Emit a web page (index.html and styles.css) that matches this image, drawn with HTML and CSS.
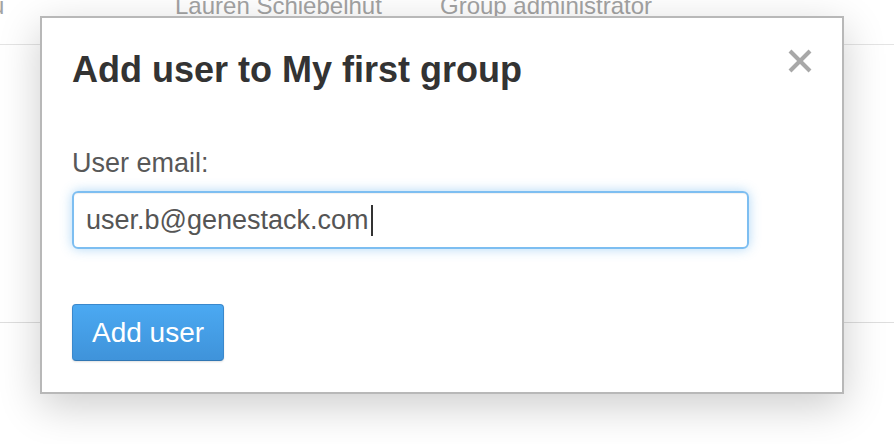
FILE: index.html
```html
<!DOCTYPE html>
<html>
<head>
<meta charset="utf-8">
<link rel="stylesheet" href="styles.css">
</head>
<body>
<div class="page">
  <div class="row row-top">
    <div class="cell c1">u</div>
    <div class="cell c2">Lauren Schiebelhut</div>
    <div class="cell c3">Group administrator</div>
  </div>
  <div class="row row-body"></div>
</div>

<div class="modal">
  <div class="modal-header">
    <h3 class="modal-title">Add user to My first group</h3>
    <svg class="close" width="24" height="24" viewBox="0 0 24 24">
      <line x1="2" y1="2" x2="22" y2="22" stroke="#a8a8a8" stroke-width="4"/>
      <line x1="22" y1="2" x2="2" y2="22" stroke="#a8a8a8" stroke-width="4"/>
    </svg>
  </div>
  <label class="field-label">User email:</label>
  <div class="input">user.b@genestack.com<span class="caret"></span></div>
  <div class="actions">
    <button class="btn">Add user</button>
  </div>
</div>
</body>
</html>
```
FILE: styles.css
```css
html, body {
  margin: 0;
  padding: 0;
  background: #ffffff;
  font-family: "Liberation Sans", Helvetica, Arial, sans-serif;
  overflow: hidden;
}

.page {
  width: 894px;
  height: 444px;
}

.row {
  display: flex;
}

.row-top {
  margin-top: -6px;
  height: 50px;
  border-bottom: 1px solid #e4e4e4;
  font-size: 24px;
  line-height: 24px;
  color: #a3a3a3;
}

.cell {
  white-space: nowrap;
}

.c1 {
  width: 184px;
  margin-left: -9px;
}

.c2 {
  width: 265px;
}

.row-body {
  height: 277px;
  border-bottom: 1px solid #dedede;
}

.modal {
  position: absolute;
  left: 40px;
  top: 16px;
  width: 800px;
  box-sizing: content-box;
  border: 2px solid #b8b8b8;
  background: #ffffff;
  padding: 0;
  box-shadow: 0 12px 40px rgba(0, 0, 0, 0.2);
}

.modal-header {
  display: flex;
  align-items: flex-start;
  padding: 32px 30px 0 30px;
}

.modal-title {
  flex: 1;
  margin: 0;
  font-size: 36px;
  line-height: 40px;
  font-weight: bold;
  color: #333333;
}

.close {
  display: block;
  margin-top: -1px;
}

.field-label {
  display: block;
  margin: 58px 30px 0 30px;
  font-size: 27px;
  line-height: 30px;
  color: #585858;
}

.input {
  margin: 13px 30px 0 30px;
  width: 649px;
  height: 30px;
  padding: 12px 12px;
  border: 2px solid rgba(82, 168, 236, 0.75);
  border-radius: 6px;
  box-shadow: inset 0 1px 1px rgba(0, 0, 0, 0.06), 0 0 12px rgba(82, 168, 236, 0.45);
  font-size: 27px;
  line-height: 30px;
  color: #555555;
  white-space: nowrap;
}

.caret {
  display: inline-block;
  width: 2px;
  height: 31px;
  margin-left: 2px;
  background: #333333;
  vertical-align: -7px;
}

.actions {
  padding: 55px 30px 31px 30px;
}

.btn {
  display: block;
  height: 57px;
  padding: 0 19px;
  border: 1px solid #3a88cc;
  border-bottom-color: #3176b3;
  border-radius: 4px;
  background: linear-gradient(#4ba9f2, #3f93da);
  box-shadow: 0 1px 2px rgba(0, 0, 0, 0.12);
  font-family: "Liberation Sans", Helvetica, Arial, sans-serif;
  font-size: 28px;
  line-height: 33px;
  color: #ffffff;
}
```
